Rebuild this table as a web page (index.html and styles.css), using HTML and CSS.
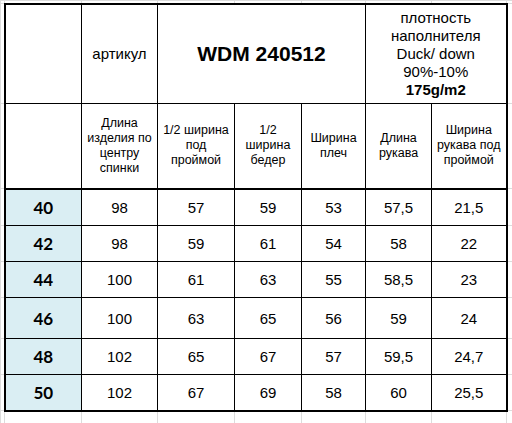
FILE: index.html
```html
<!DOCTYPE html>
<html lang="ru">
<head>
<meta charset="utf-8">
<title>WDM 240512</title>
<link rel="stylesheet" href="styles.css">
</head>
<body>
<table class="sheet">
  <colgroup>
    <col class="w-gut"><col class="w1"><col class="w2"><col class="w3"><col class="w4"><col class="w5"><col class="w6"><col class="w7"><col class="w-end">
  </colgroup>
  <tr class="r-top">
    <td class="sp"></td><td class="sp"></td><td class="sp"></td><td class="sp"></td><td class="sp"></td><td class="sp"></td><td class="sp"></td><td class="sp"></td><td class="sp"></td>
  </tr>
  <tr class="r1">
    <td class="sp"></td>
    <td class="m first top"></td>
    <td class="m top art">артикул</td>
    <td class="m top model" colspan="3">WDM 240512</td>
    <td class="m top last fill" colspan="2">плотность<br>наполнителя<br>Duck/ down<br>90%-10%<br><b>175g/m2</b></td>
    <td class="sp"></td>
  </tr>
  <tr class="r2">
    <td class="sp"></td>
    <td class="m first"></td>
    <td class="m hd">Длина<br>изделия по<br>центру<br>спинки</td>
    <td class="m hd">1/2 ширина<br>под<br>проймой</td>
    <td class="m hd">1/2<br>ширина<br>бедер</td>
    <td class="m hd">Ширина<br>плеч</td>
    <td class="m hd">Длина<br>рукава</td>
    <td class="m hd last">Ширина<br>рукава под<br>проймой</td>
    <td class="sp"></td>
  </tr>
  <tr class="rd r3">
    <td class="sp"></td><td class="m first size sep">40</td><td class="m sep">98</td><td class="m sep">57</td><td class="m sep">59</td><td class="m sep">53</td><td class="m sep">57,5</td><td class="m last sep">21,5</td><td class="sp"></td>
  </tr>
  <tr class="rd r4">
    <td class="sp"></td><td class="m first size">42</td><td class="m">98</td><td class="m">59</td><td class="m">61</td><td class="m">54</td><td class="m">58</td><td class="m last">22</td><td class="sp"></td>
  </tr>
  <tr class="rd r5">
    <td class="sp"></td><td class="m first size">44</td><td class="m">100</td><td class="m">61</td><td class="m">63</td><td class="m">55</td><td class="m">58,5</td><td class="m last">23</td><td class="sp"></td>
  </tr>
  <tr class="rd r6">
    <td class="sp"></td><td class="m first size">46</td><td class="m">100</td><td class="m">63</td><td class="m">65</td><td class="m">56</td><td class="m">59</td><td class="m last">24</td><td class="sp"></td>
  </tr>
  <tr class="rd r7">
    <td class="sp"></td><td class="m first size">48</td><td class="m">102</td><td class="m">65</td><td class="m">67</td><td class="m">57</td><td class="m">59,5</td><td class="m last">24,7</td><td class="sp"></td>
  </tr>
  <tr class="rd r8">
    <td class="sp"></td><td class="m first size bottom">50</td><td class="m bottom">102</td><td class="m bottom">67</td><td class="m bottom">69</td><td class="m bottom">58</td><td class="m bottom">60</td><td class="m last bottom">25,5</td><td class="sp"></td>
  </tr>
  <tr class="r-bot">
    <td class="sp"></td><td class="sp"></td><td class="sp"></td><td class="sp"></td><td class="sp"></td><td class="sp"></td><td class="sp"></td><td class="sp"></td><td class="sp"></td>
  </tr>
</table>
</body>
</html>
```

FILE: styles.css
```css
html, body {
  margin: 0;
  padding: 0;
  background: #ffffff;
  overflow: hidden;
  width: 512px;
  height: 423px;
}

.sheet {
  border-collapse: collapse;
  table-layout: fixed;
  width: 512px;
  font-family: "Liberation Sans", Arial, sans-serif;
  color: #000;
}

.w-gut { width: 4px; }
.w1 { width: 77px; }
.w2 { width: 76px; }
.w3 { width: 77px; }
.w4 { width: 67px; }
.w5 { width: 64px; }
.w6 { width: 66px; }
.w7 { width: 75px; }
.w-end { width: 6px; }

.sheet td {
  padding: 0;
  text-align: center;
  vertical-align: middle;
}

.sp {
  border: 1px solid #dcdcdc;
}

.m {
  border: 1px solid #000;
  background: #fff;
}

.m.top { border-top: 2px solid #000; }
.m.first { border-left: 2px solid #000; }
.m.last { border-right: 2px solid #000; }
.m.bottom { border-bottom: 2px solid #000; }
.m.sep { border-top: 2px solid #000; }

.r-top { height: 3px; }
.r1 { height: 100px; }
.r2 { height: 85px; }
.r3 { height: 37px; }
.r4, .r5, .r7, .r8 { height: 36px; }
.r6 { height: 41px; }
.r-bot { height: 20px; }

.art {
  font-size: 15px;
}

.model {
  font-size: 21px;
  font-weight: bold;
}

.fill {
  font-size: 15px;
  line-height: 18px;
}

.hd {
  font-size: 12.5px;
  line-height: 15px;
  white-space: nowrap;
}

.rd .m {
  font-size: 15px;
}

.rd .m.size {
  background: #daeef3;
  font-family: Lato, "Liberation Sans", sans-serif;
  font-weight: bold;
  font-size: 17px;
}
```
